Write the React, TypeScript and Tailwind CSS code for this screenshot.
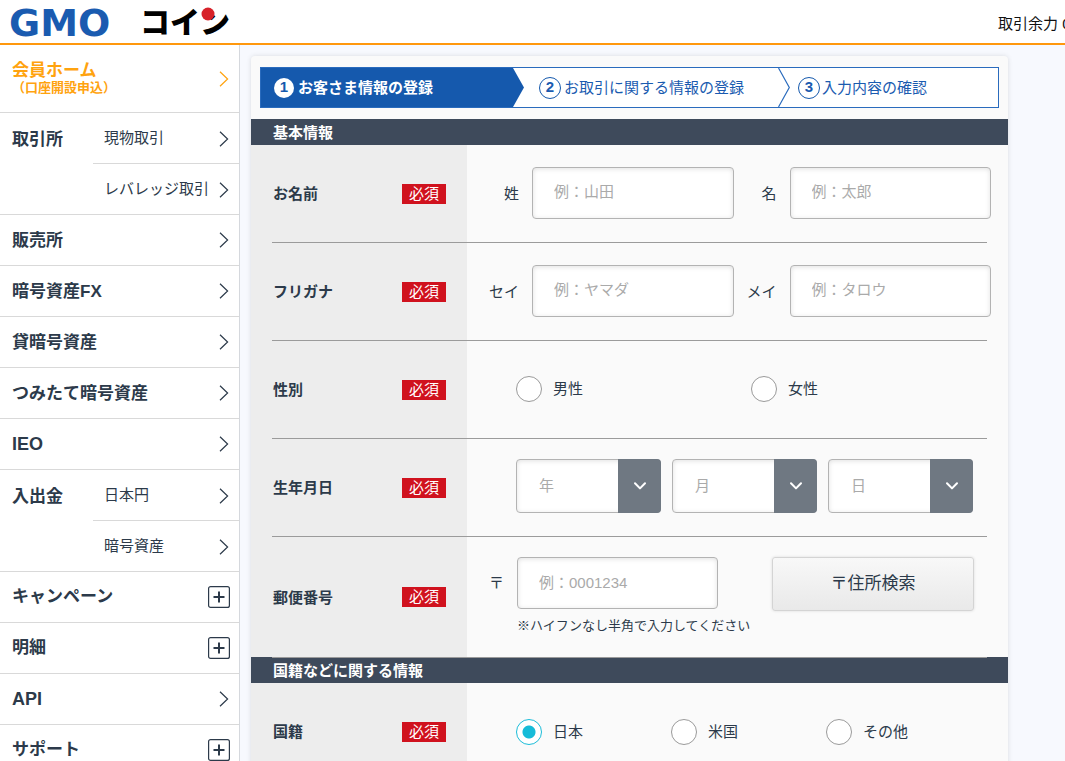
import type { ReactNode } from "react";

type Entry = { label: string; kind?: "link" | "expand"; latin?: boolean; children?: string[] };

const entries: Entry[] = [
  { label: "取引所", children: ["現物取引", "レバレッジ取引"] },
  { label: "販売所" },
  { label: "暗号資産FX" },
  { label: "貸暗号資産" },
  { label: "つみたて暗号資産" },
  { label: "IEO", latin: true },
  { label: "入出金", children: ["日本円", "暗号資産"] },
  { label: "キャンペーン", kind: "expand" },
  { label: "明細", kind: "expand" },
  { label: "API", latin: true },
  { label: "サポート", kind: "expand" },
];

function Chevron() {
  return (
    <svg viewBox="0 0 10 16" className="h-4 w-2.5 shrink-0" fill="none" stroke="currentColor" strokeWidth="1.2" aria-hidden="true">
      <path d="M1 .8 8.6 8 1 15.2" />
    </svg>
  );
}

function PlusBox() {
  return (
    <svg viewBox="0 0 22 22" className="size-[22px] shrink-0" fill="none" stroke="currentColor" aria-hidden="true">
      <rect x=".6" y=".6" width="20.8" height="20.8" rx="2" strokeWidth="1.2" fill="#fff" />
      <path d="M5.5 11h11M11 5.5v11" strokeWidth="2" />
    </svg>
  );
}

function Logo() {
  return (
    <a href="#" aria-label="GMOコイン" className="block shrink-0">
      <svg viewBox="0 0 222 43" className="h-[43px] w-[222px] overflow-visible" aria-hidden="true">
        <text x="0" y="36" fontSize="38" className="fill-[#1a5bb0] font-bold" fontFamily="DejaVu Sans">GMO</text>
        <text x="131" y="33" fontSize="30" className="fill-black font-black" fontFamily="Noto Sans CJK JP">コイン</text>
        <circle cx="199" cy="14" r="6.5" fill="#d7222a" />
      </svg>
    </a>
  );
}

function Sidebar() {
  return (
    <nav className="w-60 shrink-0 border-r border-[#d5d8dd] bg-white">
      <a href="#" className="flex h-[68px] items-center justify-between border-b border-[#d9d9d9] pr-2.5 pl-3 font-bold text-[#ffa30f]">
        <span>
          <span className="block text-[17px] leading-[17px]">会員ホーム</span>
          <span className="block text-[13px] leading-[17px]">（口座開設申込）</span>
        </span>
        <Chevron />
      </a>
      {entries.map((e) =>
        e.children ? (
          <div key={e.label} className="flex border-b border-[#d9d9d9]">
            <h2 className="w-[93px] shrink-0 pt-0.5 pl-3 text-[17px] leading-[50px] font-bold">{e.label}</h2>
            <ul className="flex-1 divide-y divide-[#d9d9d9]">
              {e.children.map((c) => (
                <li key={c}>
                  <a href="#" className="flex h-[50px] items-center justify-between pt-px pr-2.5 pl-[11px] text-[15px] whitespace-nowrap">
                    {c}
                    <Chevron />
                  </a>
                </li>
              ))}
            </ul>
          </div>
        ) : e.kind === "expand" ? (
          <button key={e.label} type="button" className="flex h-[51px] w-full items-center justify-between border-b border-[#d9d9d9] pr-[9px] pl-3 text-[17px] font-bold">
            {e.label}
            <PlusBox />
          </button>
        ) : (
          <a key={e.label} href="#" className="flex h-[51px] items-center justify-between border-b border-[#d9d9d9] pr-2.5 pl-3 text-[17px] font-bold">
            <span className={e.latin ? "text-lg" : "pt-0.5"}>{e.label}</span>
            <Chevron />
          </a>
        ),
      )}
    </nav>
  );
}

function Steps() {
  return (
    <ol className="mx-[9px] flex h-[41px] border border-[#2a6bbd] bg-white text-[15px] text-[#1a5bb0]">
      <li className="flex flex-[263] items-stretch font-bold text-white">
        <span className="flex flex-1 items-center gap-1 bg-[#1559ad] pl-[13px]">
          <span className="flex size-5 items-center justify-center rounded-full bg-white text-[#1559ad]">1</span>
          <span className="pt-0.5">お客さま情報の登録</span>
        </span>
        <svg viewBox="0 0 11 39" className="h-[39px] w-[11px]" aria-hidden="true">
          <path d="M0 0 11 19.5 0 39Z" fill="#1559ad" />
        </svg>
      </li>
      <li className="flex flex-[266] items-stretch">
        <span className="flex flex-1 items-center gap-[3px] pl-[15px]">
          <span className="flex size-[22px] items-center justify-center rounded-full border border-[#1559ad] font-bold">2</span>
          <span className="pt-0.5">お取引に関する情報の登録</span>
        </span>
        <svg viewBox="0 0 12 39" className="h-[39px] w-3" fill="none" stroke="#2a6bbd" strokeWidth="1.2" aria-hidden="true">
          <path d="M.5 0 11.3 19.5 .5 39" />
        </svg>
      </li>
      <li className="flex flex-[208] items-stretch">
        <span className="flex flex-1 items-center gap-0.5 pl-2">
          <span className="flex size-[22px] items-center justify-center rounded-full border border-[#1559ad] font-bold">3</span>
          <span className="pt-0.5">入力内容の確認</span>
        </span>
      </li>
    </ol>
  );
}

function Row({ label, last, tall, children }: { label: string; last?: boolean; tall?: boolean; children: ReactNode }) {
  return (
    <div role="group" aria-label={label}>
      <div className={tall ? "flex h-[120px]" : "flex h-[97px]"}>
        <div className="flex w-[216px] shrink-0 items-center justify-between pr-[21px] pl-[22px] text-[15px]">
          <span className="pt-0.5 font-bold">{label}</span>
          <span className="h-5 w-11 bg-[#d0121e] text-center leading-5 text-white">必須</span>
        </div>
        <div className="min-w-0 flex-1">{children}</div>
      </div>
      {!last && <hr className="mx-[21px] border-[#9b9b9b]" />}
    </div>
  );
}

const box = "rounded border border-[#b3b3b3] bg-white shadow-[inset_0_1px_5px_rgba(0,0,0,0.12)]";

function NameFields({ a, b, pa, pb }: { a: string; b: string; pa: string; pb: string }) {
  const input = `${box} h-[52px] w-full min-w-0 flex-1 px-[21px] pb-0.5 text-[15px] placeholder:text-[#aaa]`;
  return (
    <div className="flex h-full items-center pr-[17px] pb-0.5 text-[15px]">
      <label htmlFor={a} className="mr-[13px] w-[52px] pt-1 text-right">{a}</label>
      <input id={a} placeholder={pa} className={input} />
      <label htmlFor={b} className="mr-[13px] w-[43px] pt-1 text-right">{b}</label>
      <input id={b} placeholder={pb} className={input} />
    </div>
  );
}

function Radio({ name, label, checked, wide }: { name: string; label: string; checked?: boolean; wide?: boolean }) {
  return (
    <label className={wide ? "flex w-[235px] items-center gap-[11px]" : "flex w-[155px] items-center gap-[11px]"}>
      <input
        type="radio"
        name={name}
        defaultChecked={checked}
        className="size-[26px] appearance-none rounded-full border border-[#9a9a9a] bg-white checked:border-[#1bbcd8] checked:bg-[radial-gradient(circle,#16bbd8_6px,#fff_7px)]"
      />
      <span className="pt-0.5">{label}</span>
    </label>
  );
}

function DateSelect({ label }: { label: string }) {
  return (
    <div className="relative w-[145px]">
      <select aria-label={label} className={`${box} h-[54px] w-full appearance-none pt-0.5 pl-[22px] text-[15px] text-[#aaa]`}>
        <option>{label}</option>
      </select>
      <span className="pointer-events-none absolute inset-y-0 right-0 flex w-[43px] items-center justify-center rounded-r bg-[#6f7882]">
        <svg viewBox="0 0 12 8" className="h-2 w-3" fill="none" stroke="#fff" strokeWidth="2" aria-hidden="true">
          <path d="M1 1.2 6 6.4 11 1.2" strokeLinecap="round" strokeLinejoin="round" />
        </svg>
      </span>
    </div>
  );
}

const heading = "bg-[#3e4a5b] pl-[22px] text-[15px] font-bold text-white";
const body = "bg-[linear-gradient(to_right,#ededed_216px,#fafafa_216px)]";

export default function App() {
  return (
    <div className="min-h-screen bg-[#f7f9fe] font-['Liberation_Sans','Noto_Sans_CJK_JP',sans-serif] text-[#2c3a4a]">
      <header className="flex h-[45px] justify-between border-b-2 border-[#ff980d] bg-white pl-[9px]">
        <Logo />
        <div className="w-[67px] shrink-0 overflow-hidden pt-[5px] text-[15px] leading-[38px] whitespace-nowrap text-[#111]">取引余力 0</div>
      </header>
      <div className="flex">
        <Sidebar />
        <main className="flex-1 pt-[11px] pl-[11px]">
          <form className="max-w-[757px] rounded-t bg-[#fafafa] pt-[11px] shadow-[0_0_5px_rgba(0,0,0,0.12)]">
            <Steps />
            <h2 className={`${heading} mt-[11px] pt-0.5 leading-6`}>基本情報</h2>
            <div className={body}>
              <Row label="お名前">
                <NameFields a="姓" b="名" pa="例：山田" pb="例：太郎" />
              </Row>
              <Row label="フリガナ">
                <NameFields a="セイ" b="メイ" pa="例：ヤマダ" pb="例：タロウ" />
              </Row>
              <Row label="性別">
                <div className="flex h-full items-center pb-0.5 pl-[49px] text-[15px]">
                  <Radio name="gender" label="男性" wide />
                  <Radio name="gender" label="女性" wide />
                </div>
              </Row>
              <Row label="生年月日">
                <div className="flex h-full items-center gap-[11px] pb-1 pl-[49px]">
                  <DateSelect label="年" />
                  <DateSelect label="月" />
                  <DateSelect label="日" />
                </div>
              </Row>
              <Row label="郵便番号" tall last>
                <div className="flex items-start pt-5 pr-[34px] text-[15px]">
                  <label htmlFor="zip" className="w-[50px] pl-[22px] leading-[52px]">〒</label>
                  <div className="w-[201px]">
                    <input id="zip" placeholder="例：0001234" className={`${box} h-[52px] w-full px-[21px] pb-0.5 placeholder:text-[#aaa]`} />
                    <p className="mt-[7px] text-[13px] leading-5 whitespace-nowrap">※ハイフンなし半角で入力してください</p>
                  </div>
                  <button type="button" className="ml-auto h-[54px] w-[202px] rounded-[3px] border border-[#d4d4d4] bg-linear-to-b from-[#f8f8f8] to-[#e9e9e9] text-[17px] shadow-[0_0_3px_rgba(0,0,0,0.12)]">
                    〒住所検索
                  </button>
                </div>
              </Row>
            </div>
            <div className="bg-[#3e4a5b]">
              <hr className="mx-[21px] border-[#9b9b9b]" />
              <h2 className={`${heading} pt-px leading-6`}>国籍などに関する情報</h2>
            </div>
            <div className={body}>
              <Row label="国籍">
                <div className="flex h-full items-center pl-[49px] text-[15px]">
                  <Radio name="nation" label="日本" checked />
                  <Radio name="nation" label="米国" />
                  <Radio name="nation" label="その他" />
                </div>
              </Row>
            </div>
          </form>
        </main>
      </div>
    </div>
  );
}
